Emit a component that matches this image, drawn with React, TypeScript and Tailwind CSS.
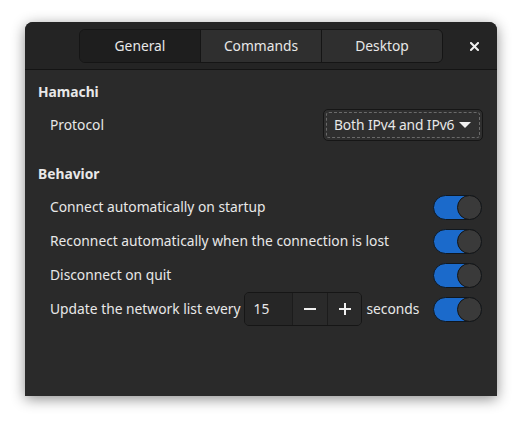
import React from "react";

function Switch() {
  return (
    <div className="w-[49px] h-[25px] rounded-full bg-[#1b6acb] border border-[#101820] relative shrink-0">
      <div className="absolute right-[-1px] top-[-1px] w-[25px] h-[25px] rounded-full bg-[#3a3a3a] border border-[#141414]" />
    </div>
  );
}

function Row({ children }: { children: React.ReactNode }) {
  return (
    <div className="flex items-center justify-between h-[34px] pl-[25px] pr-[15px]">
      {children}
    </div>
  );
}

export default function App() {
  const font = { fontFamily: '"Noto Sans", "Open Sans", sans-serif' };
  return (
    <div className="w-[522px] h-[424px] bg-white pt-[22px] pl-[25px]" style={font}>
      <div className="w-[472px] h-[374px] rounded-t-[8px] bg-[#2a2a2a] shadow-[0_3px_14px_rgba(0,0,0,0.45)] flex flex-col overflow-hidden text-[#e8e8e8] text-[13.8px] whitespace-nowrap">
        <div className="h-[48px] bg-[#242424] border-b border-[#141414] flex items-center">
          <div className="ml-[54px] flex h-[34px] rounded-[6px] border border-[#151515] overflow-hidden">
            <div className="w-[121px] bg-[#1e1e1e] flex items-center justify-center border-r border-[#151515] pt-[1px]">General</div>
            <div className="w-[121px] bg-[#2f2f2f] flex items-center justify-center border-r border-[#151515] pt-[1px]">Commands</div>
            <div className="w-[120px] bg-[#2f2f2f] flex items-center justify-center pt-[1px]">Desktop</div>
          </div>
          <div className="ml-[27px] w-[8px] h-[8px]">
            <svg width="9" height="9" viewBox="0 0 9 9">
              <path d="M1 1L8 8M8 1L1 8" stroke="#f0f0f0" strokeWidth="2" strokeLinecap="square" />
            </svg>
          </div>
        </div>
        <div className="flex flex-col pt-[9px]">
          <div className="h-[26px] flex items-center pl-[13px] font-bold">Hamachi</div>
          <div className="flex items-center justify-between h-[38px] pl-[25px] pr-[14px] mt-[1px]">
            <span>Protocol</span>
            <div className="w-[160px] h-[32px] rounded-[5px] bg-[#2f2f2f] border border-[#161616] p-[2px]">
              <div className="w-full h-full rounded-[3px] border border-dashed border-[#6a6a6a] flex items-center gap-[5px] pl-[7px]">
                <span className="tracking-[-0.1px]">Both IPv4 and IPv6</span>
                <svg width="12" height="6" viewBox="0 0 12 6">
                  <path d="M0 0H12L6 6Z" fill="#f0f0f0" />
                </svg>
              </div>
            </div>
          </div>
          <div className="h-[26px] flex items-center pl-[13px] font-bold mt-[17px]">Behavior</div>
          <div className="flex flex-col mt-[3px]">
            <Row>
              <span>Connect automatically on startup</span>
              <Switch />
            </Row>
            <Row>
              <span>Reconnect automatically when the connection is lost</span>
              <Switch />
            </Row>
            <Row>
              <span>Disconnect on quit</span>
              <Switch />
            </Row>
            <Row>
              <div className="flex items-center">
                <span>Update the network list every</span>
                <div className="ml-[4px] flex h-[34px] w-[118px] rounded-[5px] border border-[#161616] bg-[#262626] overflow-hidden">
                  <div className="w-[47px] flex items-center pl-[8px] bg-[#262626]">15</div>
                  <div className="w-[35px] flex items-center justify-center border-l border-[#1c1c1c] bg-[#2a2a2a]">
                    <svg width="12" height="2" viewBox="0 0 12 2"><rect width="12" height="2" fill="#f0f0f0" /></svg>
                  </div>
                  <div className="w-[35px] flex items-center justify-center border-l border-[#1c1c1c] bg-[#2a2a2a]">
                    <svg width="12" height="12" viewBox="0 0 12 12"><rect y="5" width="12" height="2" fill="#f0f0f0" /><rect x="5" width="2" height="12" fill="#f0f0f0" /></svg>
                  </div>
                </div>
                <span className="ml-[4px]">seconds</span>
              </div>
              <Switch />
            </Row>
          </div>
        </div>
      </div>
    </div>
  );
}
